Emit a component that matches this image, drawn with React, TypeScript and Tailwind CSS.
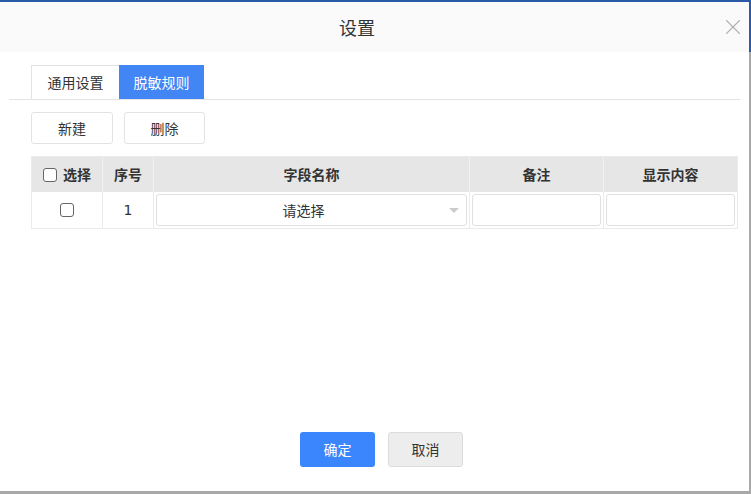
import { X } from 'lucide-react';

const cols = 'grid grid-cols-[70px_51px_316px_134px_134px]';

function Box({ className = '' }: { className?: string }) {
  return <span className={`inline-block w-[14px] h-[14px] rounded-[3px] border border-[#666] bg-white ${className}`} />;
}

export default function App() {
  return (
    <div
      className="w-[751px] h-[494px] flex flex-col bg-[#a8a8a8] text-[#333]"
      style={{ fontFamily: '"Noto Sans CJK SC", "Noto Sans", sans-serif' }}
    >
      <div className="h-[2px] bg-[#2b5ba8]" />
      <div className="flex flex-1">
        <div className="w-[749px] flex flex-col bg-white">
          {/* Header */}
          <div className="h-[50px] bg-[#fafafa] flex items-center">
            <div className="flex-1 text-center text-[18px] leading-none text-[#333]">设置</div>
            <div className="w-[35px] flex items-center justify-center pl-[3px] text-[#b0b0b0]">
              <X className="w-[26px] h-[26px]" strokeWidth={1} />
            </div>
          </div>

          {/* Tabs */}
          <div className="mx-[9px] mt-[13px] pl-[22px] flex border-b border-[#e3e3e3]">
            <div className="w-[88px] h-[34px] flex items-center justify-center text-[14px] border-l border-t border-[#e3e3e3]">
              通用设置
            </div>
            <div className="w-[85px] h-[34px] flex items-center justify-center text-[14px] text-white bg-[#4285f4]">
              脱敏规则
            </div>
          </div>

          {/* Toolbar */}
          <div className="flex gap-[11px] pl-[31px] mt-[12px]">
            <button className="w-[82px] h-[32px] border border-[#e3e3e3] rounded-[3px] bg-white text-[14px]">新建</button>
            <button className="w-[81px] h-[32px] border border-[#e3e3e3] rounded-[3px] bg-white text-[14px]">删除</button>
          </div>

          {/* Table */}
          <div className="ml-[31px] mt-[12px] w-[707px] border border-[#ebebeb]">
            <div className={`${cols} h-[35px] bg-[#e6e6e6] text-[14px] font-bold`}>
              <div className="flex items-center justify-center gap-[6px]">
                <Box />
                选择
              </div>
              <div className="flex items-center justify-center border-l border-[#f2f2f2]">序号</div>
              <div className="flex items-center justify-center border-l border-[#f2f2f2]">字段名称</div>
              <div className="flex items-center justify-center border-l border-[#f2f2f2]">备注</div>
              <div className="flex items-center justify-center border-l border-[#f2f2f2]">显示内容</div>
            </div>
            <div className={`${cols} h-[36px] text-[14px]`}>
              <div className="flex items-center justify-center">
                <Box />
              </div>
              <div className="flex items-center justify-center border-l border-[#ebebeb]" style={{ fontFamily: '"DejaVu Sans", sans-serif' }}>
                1
              </div>
              <div className="p-[2px] border-l border-[#ebebeb]">
                <div className="relative h-full border border-[#e0e0e0] rounded-[3px] flex items-center justify-center pr-[16px]">
                  请选择
                  <span className="absolute right-[7px] top-[13px] w-0 h-0 border-x-[5px] border-x-transparent border-t-[5px] border-t-[#ccc]" />
                </div>
              </div>
              <div className="p-[2px] border-l border-[#ebebeb]">
                <div className="h-full border border-[#e0e0e0] rounded-[3px]" />
              </div>
              <div className="p-[2px] border-l border-[#ebebeb]">
                <div className="h-full border border-[#e0e0e0] rounded-[3px]" />
              </div>
            </div>
          </div>

          <div className="flex-1" />

          {/* Footer */}
          <div className="flex justify-center gap-[13px] pb-[24px] pl-[14px]">
            <button className="w-[75px] h-[35px] rounded-[3px] bg-[#3b86fc] text-white text-[14px]">确定</button>
            <button className="w-[75px] h-[35px] rounded-[3px] bg-[#ededed] border border-[#dcdcdc] text-[14px]">取消</button>
          </div>
        </div>
        <div className="w-[2px] flex flex-col">
          <div className="h-[50px] bg-[#2b5ba8]" />
          <div className="flex-1 bg-[#a8a8a8]" />
        </div>
      </div>
      <div className="h-[3px] bg-[#a8a8a8]" />
    </div>
  );
}
